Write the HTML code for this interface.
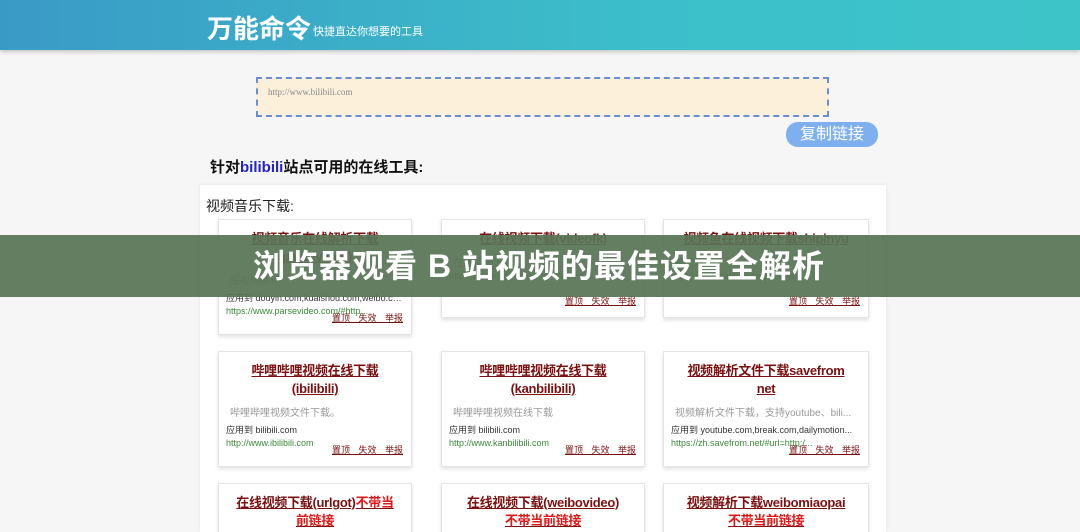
<!DOCTYPE html><html><head><meta charset="utf-8"><style>
*{margin:0;padding:0;box-sizing:border-box}
html,body{width:1080px;height:532px;overflow:hidden}
body{background:#f6f6f6;font-family:"Liberation Sans","Noto Sans CJK SC",sans-serif;position:relative}
.hdr{position:absolute;left:0;top:0;width:1080px;height:50px;background:linear-gradient(90deg,#3a9ac6,#3cbfca 60%,#3dc4c9);box-shadow:0 2px 4px rgba(0,0,0,.2)}
.logo{position:absolute;left:207px;top:9px;color:#fff;font-size:26px;font-weight:bold}
.sub{position:absolute;left:313px;top:23px;color:#fff;font-size:11px}
.ta{position:absolute;left:256px;top:77px;width:573px;height:40px;background:#fcf0da;border:2px dashed #6a8fd0;font-family:"Liberation Serif",serif;font-size:9px;color:#888;padding:8px 10px}
.btn{position:absolute;left:786px;top:122px;width:92px;height:25px;border-radius:12px;background:#7eb0ef;color:#fff;font-size:16px;text-align:center;line-height:25px}
.h2{position:absolute;left:210px;top:156px;font-size:15px;font-weight:bold;color:#111}
.h2 b{color:#2222cc}
.panel{position:absolute;left:200px;top:185px;width:686px;height:347px;background:#fff;box-shadow:0 0 4px rgba(0,0,0,.08)}
.pt{position:absolute;left:206px;top:196px;font-size:14px;color:#222}
.card{position:absolute;background:#fff;border:1px solid #e4e4e4;box-shadow:0 2px 4px rgba(0,0,0,.12);font-size:9px;padding:0 7px}
.card h3{font-size:13px;color:#7a1010;text-decoration:underline;text-align:center;font-weight:bold;line-height:18px;margin-top:10px;letter-spacing:-.3px}
.card h3 span{color:#e01818;text-decoration:none}
.d,.a,.u{white-space:nowrap;overflow:hidden;text-overflow:ellipsis}
.d{color:#999;font-size:10px;margin-top:6px;padding-left:4px}
.a{color:#333;margin-top:4px}
.u{color:#3a8a3a;margin-top:2px}
.l{position:absolute;right:8px;bottom:10px;color:#7a1010;text-decoration:underline;word-spacing:6px}
.band{position:absolute;left:0;top:235px;width:1080px;height:62px;background:rgba(88,116,86,.93)}
.band div{color:#fff;font-size:32px;font-weight:bold;text-align:center;line-height:62px;margin-left:-2px;letter-spacing:1px}
</style></head><body>
<div class="hdr"><div class="logo">万能命令</div><div class="sub">快捷直达你想要的工具</div></div>
<div class="ta">http://www.bilibili.com</div>
<div class="btn">复制链接</div>
<div class="h2">针对<b>bilibili</b>站点可用的在线工具:</div>
<div class="panel"></div>
<div class="pt">视频音乐下载:</div>
<div class="card" style="left:218px;top:219px;width:194px;height:116px"><h3>视频音乐在线解析下载<br>(parsevideo)</h3><div class="d">短视频解析</div><div class="a">应用到 douyin.com,kuaishou.com,weibo.com...</div><div class="u">https://www.parsevideo.com/#http...</div><div class="l">置顶 失效 举报</div></div>
<div class="card" style="left:441px;top:219px;width:204px;height:99px"><h3>在线视频下载(videofk)</h3><div class="d">在线视频下载</div><div class="u">https://www.videofk.com/index-vid...</div><div class="l">置顶 失效 举报</div></div>
<div class="card" style="left:663px;top:219px;width:206px;height:99px"><h3>视频鱼在线视频下载shipinyu</h3><div class="d">视频鱼</div><div class="u">http://www.shipinyu.cn/videourl=...</div><div class="l">置顶 失效 举报</div></div>
<div class="card" style="left:218px;top:351px;width:194px;height:116px"><h3>哔哩哔哩视频在线下载<br>(ibilibili)</h3><div class="d">哔哩哔哩视频文件下载。</div><div class="a">应用到 bilibili.com</div><div class="u">http://www.ibilibili.com</div><div class="l">置顶 失效 举报</div></div>
<div class="card" style="left:441px;top:351px;width:204px;height:116px"><h3>哔哩哔哩视频在线下载<br>(kanbilibili)</h3><div class="d">哔哩哔哩视频在线下载</div><div class="a">应用到 bilibili.com</div><div class="u">http://www.kanbilibili.com</div><div class="l">置顶 失效 举报</div></div>
<div class="card" style="left:663px;top:351px;width:206px;height:116px"><h3>视频解析文件下载savefrom<br>net</h3><div class="d">视频解析文件下载，支持youtube、bili...</div><div class="a">应用到 youtube.com,break.com,dailymotion...</div><div class="u">https://zh.savefrom.net/#url=http:/...</div><div class="l">置顶 失效 举报</div></div>
<div class="card" style="left:218px;top:483px;width:194px;height:60px"><h3>在线视频下载(urlgot)<span>不带当<br>前链接</span></h3></div>
<div class="card" style="left:441px;top:483px;width:204px;height:60px"><h3>在线视频下载(weibovideo)<br><span>不带当前链接</span></h3></div>
<div class="card" style="left:663px;top:483px;width:206px;height:60px"><h3>视频解析下载weibomiaopai<br><span>不带当前链接</span></h3></div>
<div class="band"><div>浏览器观看 B 站视频的最佳设置全解析</div></div>
</body></html>
